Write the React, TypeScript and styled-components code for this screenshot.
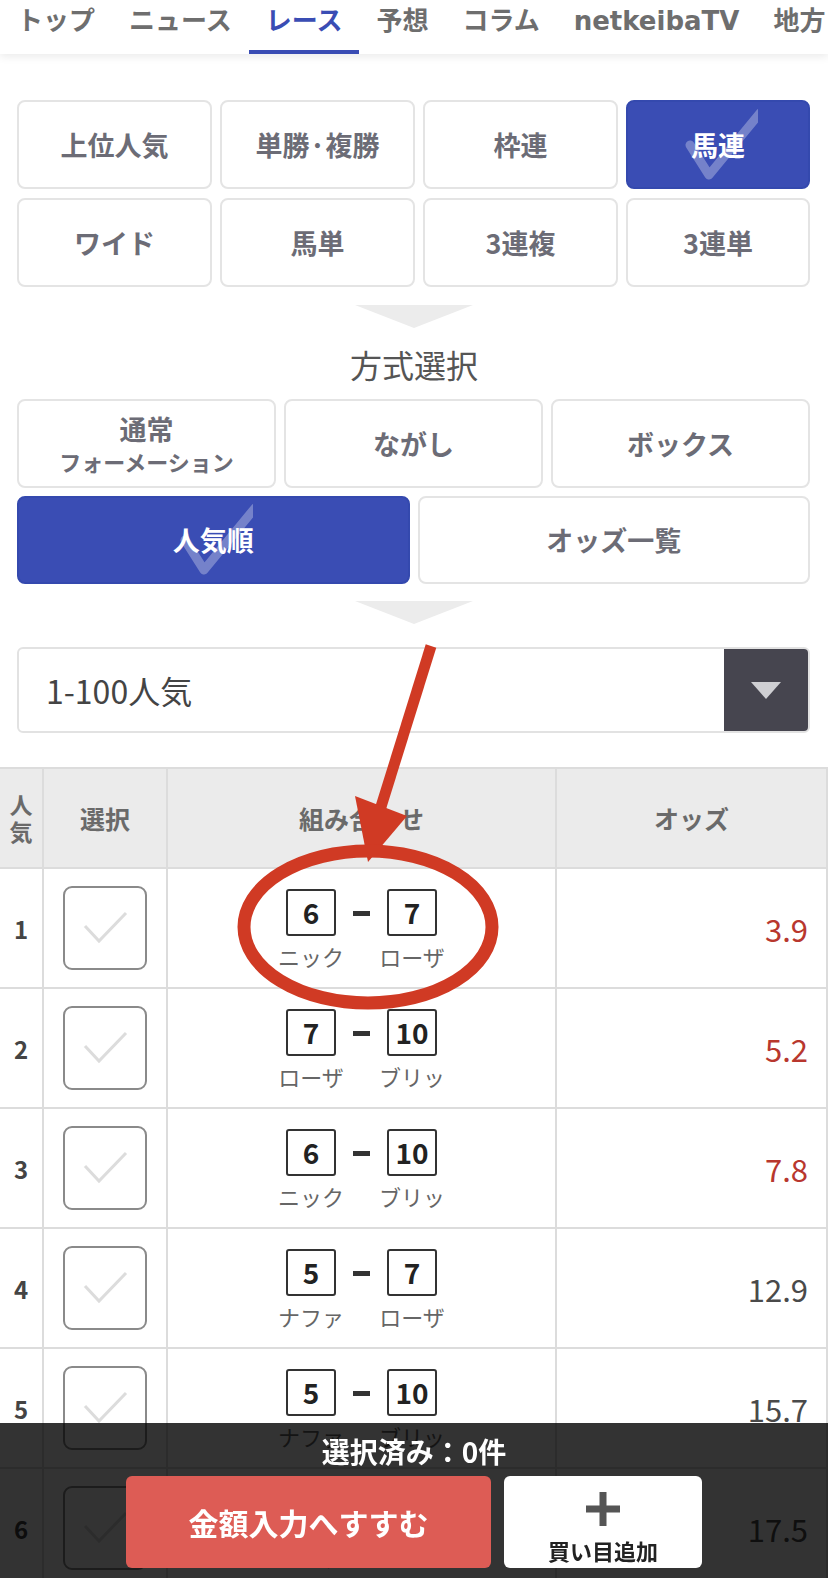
import styled, { createGlobalStyle } from "styled-components";

const GlobalStyle = createGlobalStyle`
  * { box-sizing: border-box; }
  html, body { margin: 0; padding: 0; background: #fff; }
  body { font-family: "Noto Sans CJK JP", "Noto Sans", sans-serif; }
`;

const navItems = ["トップ", "ニュース", "レース", "予想", "コラム", "netkeibaTV", "地方"];
const betTypes = ["上位人気", "単勝·複勝", "枠連", "馬連", "ワイド", "馬単", "3連複", "3連単"];

type Horse = { no: number; name: string };
type Combo = { rank: number; a: Horse; b: Horse; odds: string };

const NICK = { no: 6, name: "ニック" };
const ROSA = { no: 7, name: "ローザ" };
const BRI = { no: 10, name: "ブリッ" };
const NAFA = { no: 5, name: "ナファ" };

const combos: Combo[] = [
  { rank: 1, a: NICK, b: ROSA, odds: "3.9" },
  { rank: 2, a: ROSA, b: BRI, odds: "5.2" },
  { rank: 3, a: NICK, b: BRI, odds: "7.8" },
  { rank: 4, a: NAFA, b: ROSA, odds: "12.9" },
  { rank: 5, a: NAFA, b: BRI, odds: "15.7" },
  { rank: 6, a: NAFA, b: NICK, odds: "17.5" },
];

const BLUE = "#3a4db4";
const RED = "#d03a24";

export default function App() {
  return (
    <Page>
      <GlobalStyle />
      <Nav>
        {navItems.map((n) => (
          <NavItem key={n} $active={n === "レース"}>
            {n}
          </NavItem>
        ))}
      </Nav>

      <BetGrid>
        {betTypes.map((t) => (
          <OptionButton key={t} $selected={t === "馬連"}>
            {t === "馬連" && <SelectedCheck />}
            <Label>{t}</Label>
          </OptionButton>
        ))}
      </BetGrid>

      <Down $top={18} />
      <Heading>方式選択</Heading>

      <MethodRow $cols={3}>
        <OptionButton>
          <Label>通常</Label>
          <Label $small>フォーメーション</Label>
        </OptionButton>
        <OptionButton>
          <Label>ながし</Label>
        </OptionButton>
        <OptionButton>
          <Label>ボックス</Label>
        </OptionButton>
      </MethodRow>
      <MethodRow $cols={2} $short>
        <OptionButton $selected>
          <SelectedCheck />
          <Label>人気順</Label>
        </OptionButton>
        <OptionButton>
          <Label>オッズ一覧</Label>
        </OptionButton>
      </MethodRow>

      <Down $top={17} />

      <Select>
        <SelectValue>1-100人気</SelectValue>
        <SelectArrow />
      </Select>

      <Table>
        <Row $head>
          <HeadCell $small>
            人<br />気
          </HeadCell>
          <HeadCell>選択</HeadCell>
          <HeadCell>組み合わせ</HeadCell>
          <HeadCell>オッズ</HeadCell>
        </Row>
        {combos.map((c) => (
          <Row key={c.rank}>
            <Cell>
              <Rank>{c.rank}</Rank>
            </Cell>
            <Cell>
              <CheckBox>
                <svg width="84" height="84" viewBox="0 0 84 84">
                  <path d="M22 40 L36 55 L63 27" fill="none" stroke="#dcdcdc" strokeWidth="3" />
                </svg>
              </CheckBox>
            </Cell>
            <Cell>
              <ComboWrap>
                <HorseCol>
                  <NumBox>{c.a.no}</NumBox>
                  <Name>{c.a.name}</Name>
                </HorseCol>
                <Dash />
                <HorseCol>
                  <NumBox>{c.b.no}</NumBox>
                  <Name>{c.b.name}</Name>
                </HorseCol>
              </ComboWrap>
            </Cell>
            <OddsCell $hot={parseFloat(c.odds) < 10}>{c.odds}</OddsCell>
          </Row>
        ))}
      </Table>

      <Annotation viewBox="0 0 828 1100">
        <line x1="431" y1="646" x2="380" y2="810" stroke={RED} strokeWidth="11" />
        <polygon points="355,796 407,816 368,862" fill={RED} />
        <ellipse cx="368" cy="927" rx="124" ry="76" fill="none" stroke={RED} strokeWidth="13" />
      </Annotation>

      <Footer>
        <FooterCount>選択済み：0件</FooterCount>
        <FooterButtons>
          <GoButton>金額入力へすすむ</GoButton>
          <AddButton>
            <svg width="34" height="34" viewBox="0 0 34 34">
              <path d="M17 0 V34 M0 17 H34" stroke="#555" strokeWidth="7" />
            </svg>
            <AddLabel>買い目追加</AddLabel>
          </AddButton>
        </FooterButtons>
      </Footer>
    </Page>
  );
}

const SelectedCheck = () => (
  <CheckMark viewBox="-40 -36 80 72">
    <path
      d="M-28 0 L-9 30 L42 -32"
      fill="none"
      stroke="rgba(255,255,255,0.3)"
      strokeWidth="9"
      strokeLinecap="round"
      strokeLinejoin="round"
    />
  </CheckMark>
);

const Page = styled.div`
  position: relative;
  min-height: 1578px;
  padding-bottom: 160px;
`;

const Nav = styled.nav`
  position: relative;
  z-index: 1;
  display: flex;
  height: 54px;
  overflow: hidden;
  white-space: nowrap;
  background: #fff;
  box-shadow: 0 3px 8px rgba(0, 0, 0, 0.08);
`;

const NavItem = styled.a<{ $active?: boolean }>`
  flex: none;
  padding: 4px 17px 12px;
  font-family: "DejaVu Sans", "Noto Sans CJK JP", sans-serif;
  font-size: 26px;
  line-height: 34px;
  font-weight: 700;
  color: ${(p) => (p.$active ? BLUE : "#6e6e6e")};
  border-bottom: 4px solid ${(p) => (p.$active ? BLUE : "transparent")};
`;

const BetGrid = styled.div`
  display: grid;
  grid-template-columns: 195px 195px 195px 1fr;
  grid-auto-rows: 89px;
  gap: 9px 8px;
  padding: 46px 18px 0 17px;
`;

const OptionButton = styled.button<{ $selected?: boolean }>`
  position: relative;
  display: flex;
  flex-direction: column;
  align-items: center;
  justify-content: center;
  padding: 0;
  overflow: hidden;
  border: 2px solid ${(p) => (p.$selected ? "#3449ae" : "#e4e4e4")};
  border-radius: 8px;
  background: ${(p) => (p.$selected ? BLUE : "#fff")};
  color: ${(p) => (p.$selected ? "#fff" : "#6c6c76")};
  font-family: inherit;
  font-weight: 700;
`;

const Label = styled.span<{ $small?: boolean }>`
  position: relative;
  font-size: ${(p) => (p.$small ? 22 : 27)}px;
  line-height: ${(p) => (p.$small ? 30 : 34)}px;
`;

const CheckMark = styled.svg`
  position: absolute;
  left: 50%;
  top: 50%;
  width: 80px;
  height: 72px;
  transform: translate(-50%, -50%);
  pointer-events: none;
`;

const Down = styled.div<{ $top: number }>`
  width: 0;
  height: 0;
  margin: ${(p) => p.$top}px auto 0;
  border-left: 59px solid transparent;
  border-right: 59px solid transparent;
  border-top: 23px solid #ececec;
`;

const Heading = styled.h2`
  margin: 16px 0 15px;
  text-align: center;
  font-size: 32px;
  line-height: 40px;
  font-weight: 400;
  color: #555;
`;

const MethodRow = styled.div<{ $cols: number; $short?: boolean }>`
  display: grid;
  grid-template-columns: repeat(${(p) => p.$cols}, 1fr);
  gap: 8px;
  height: ${(p) => (p.$short ? 88 : 89)}px;
  margin-bottom: ${(p) => (p.$short ? 0 : 8)}px;
  padding: 0 18px 0 17px;
`;

const Select = styled.div`
  display: flex;
  height: 86px;
  margin: 23px 18px 0 17px;
  border: 2px solid #e2e2e2;
  border-radius: 6px;
  overflow: hidden;
`;

const SelectValue = styled.div`
  flex: 1;
  display: flex;
  align-items: center;
  padding-left: 27px;
  font-size: 32px;
  color: #444;
`;

const SelectArrow = styled.div`
  width: 84px;
  display: flex;
  align-items: center;
  justify-content: center;
  background: #46454f;
  &::after {
    content: "";
    border-left: 15px solid transparent;
    border-right: 15px solid transparent;
    border-top: 17px solid #cfcfd3;
  }
`;

const Table = styled.div`
  margin-top: 34px;
  border-top: 2px solid #dcdcdc;
`;

const Row = styled.div<{ $head?: boolean }>`
  display: grid;
  grid-template-columns: 44px 124px 389px 1fr;
  height: ${(p) => (p.$head ? 100 : 120)}px;
  border-bottom: 2px solid #dcdcdc;
  background: ${(p) => (p.$head ? "#ebebeb" : "#fff")};
`;

const Cell = styled.div`
  display: flex;
  align-items: center;
  justify-content: center;
  border-right: 2px solid #dcdcdc;
`;

const HeadCell = styled(Cell)<{ $small?: boolean }>`
  text-align: center;
  font-size: ${(p) => (p.$small ? 23 : 25)}px;
  line-height: ${(p) => (p.$small ? 27 : 32)}px;
  font-weight: 700;
  color: #6a6a6a;
`;

const Rank = styled.span`
  font-size: 24px;
  font-weight: 700;
  color: #444;
`;

const CheckBox = styled.div`
  width: 84px;
  height: 84px;
  border: 2px solid #8a8a8a;
  border-radius: 9px;
  svg {
    display: block;
    margin: -2px;
  }
`;

const ComboWrap = styled.div`
  display: flex;
  align-items: flex-start;
  gap: 7px;
`;

const HorseCol = styled.div`
  display: flex;
  flex-direction: column;
  align-items: center;
  width: 70px;
`;

const NumBox = styled.div`
  width: 50px;
  height: 47px;
  display: flex;
  align-items: center;
  justify-content: center;
  border: 2px solid #333;
  border-radius: 3px;
  font-size: 28px;
  font-weight: 700;
  color: #222;
`;

const Name = styled.div`
  margin-top: 8px;
  font-size: 22px;
  line-height: 24px;
  color: #666;
  white-space: nowrap;
`;

const Dash = styled.div`
  width: 17px;
  height: 5px;
  margin-top: 22px;
  background: #333;
`;

const OddsCell = styled.div<{ $hot: boolean }>`
  display: flex;
  align-items: center;
  justify-content: flex-end;
  padding-right: 18px;
  border-right: 2px solid #dcdcdc;
  font-size: 31px;
  color: ${(p) => (p.$hot ? "#b8372e" : "#4a4a4a")};
`;

const Annotation = styled.svg`
  position: absolute;
  left: 0;
  top: 0;
  width: 828px;
  height: 1100px;
  z-index: 3;
  pointer-events: none;
`;

const Footer = styled.div`
  position: fixed;
  left: 0;
  right: 0;
  bottom: 0;
  z-index: 5;
  height: 155px;
  display: flex;
  flex-direction: column;
  align-items: center;
  padding-top: 12px;
  background: rgba(0, 0, 0, 0.8);
`;

const FooterCount = styled.div`
  font-size: 28px;
  line-height: 32px;
  font-weight: 700;
  color: #fff;
`;

const FooterButtons = styled.div`
  display: flex;
  gap: 13px;
  margin-top: 9px;
`;

const GoButton = styled.button`
  width: 365px;
  height: 92px;
  border: none;
  border-radius: 6px;
  background: #dd5c55;
  color: #fff;
  font-family: inherit;
  font-size: 30px;
  font-weight: 700;
`;

const AddButton = styled.button`
  width: 198px;
  height: 92px;
  display: flex;
  flex-direction: column;
  align-items: center;
  padding: 16px 0 0;
  border: none;
  border-radius: 6px;
  background: #fff;
  font-family: inherit;
  svg {
    display: block;
  }
`;

const AddLabel = styled.span`
  margin-top: 11px;
  font-size: 22px;
  line-height: 26px;
  font-weight: 700;
  color: #222;
`;
